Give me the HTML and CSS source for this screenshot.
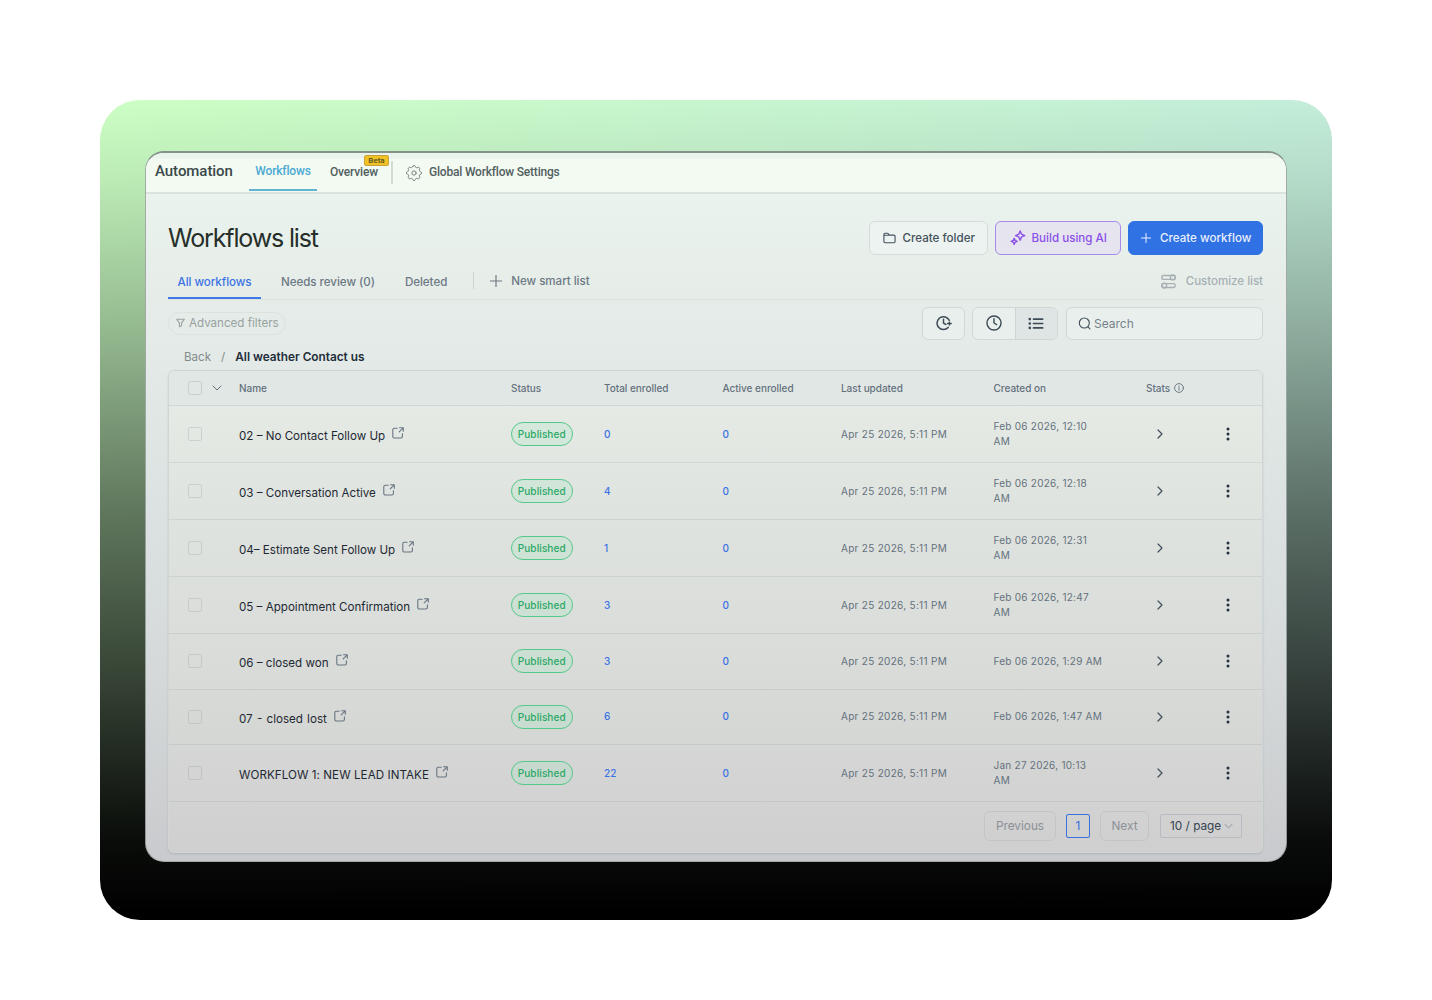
FILE: index.html
```html
<!DOCTYPE html>
<html lang="en">
	<head>
		<meta charset="UTF-8" />
		<meta name="viewport" content="width=device-width, initial-scale=1.0" />
		<title>Workflows list</title>
		<link rel="stylesheet" href="styles.css">
	</head>
	<body>
		<svg class="sprite">
			<symbol id="external" viewBox="0 0 12 12">
				<path d="M5.2 1.2H2.4a1.6 1.6 0 0 0-1.6 1.6v6.6A1.6 1.6 0 0 0 2.4 11h6.4a1.6 1.6 0 0 0 1.6-1.6V6.8M7.6.7h3.7v3.5M11.2.8 7.2 4.8" />
			</symbol>
			<symbol id="right" viewBox="0 0 8 10">
				<path d="m2 1 4 4-4 4" />
			</symbol>
			<symbol id="down" viewBox="0 0 10 6">
				<path d="m1 1 4 4 4-4" />
			</symbol>
			<symbol id="plus" viewBox="0 0 12 12">
				<path d="M6 .5v11M.5 6h11" />
			</symbol>
			<symbol id="dots" viewBox="0 0 4 14">
				<circle cx="2" cy="2" r="1.5" /><circle cx="2" cy="7" r="1.5" /><circle cx="2" cy="12" r="1.5" />
			</symbol>
		</svg>

		<div class="backdrop">
			<div class="window">
				<div class="navbar">
					<span class="brand">Automation</span>
					<a class="nav__link nav__link--active">Workflows</a>
					<a class="nav__link overview">Overview<span class="beta">Beta</span></a>
					<span class="nav__divider"></span>
					<svg class="icon gear" viewBox="0 0 24 24"><path d="M10.3 4.3c.4-1.8 3-1.8 3.4 0a1.7 1.7 0 0 0 2.6 1.1c1.5-.9 3.3.8 2.4 2.4a1.7 1.7 0 0 0 1 2.5c1.8.4 1.8 3 0 3.4a1.7 1.7 0 0 0-1 2.6c.9 1.5-.9 3.3-2.4 2.4a1.7 1.7 0 0 0-2.6 1c-.4 1.8-3 1.8-3.4 0a1.7 1.7 0 0 0-2.6-1c-1.5.9-3.3-.9-2.4-2.4a1.7 1.7 0 0 0-1-2.6c-1.8-.4-1.8-3 0-3.4a1.7 1.7 0 0 0 1-2.5c-.9-1.6.9-3.3 2.4-2.4 1 .6 2.3.1 2.6-1.1z" /><circle cx="12" cy="12" r="2.6" /></svg>
					<a class="nav__link settings">Global Workflow Settings</a>
				</div>

				<div class="content">
					<div class="title">
						<h1>Workflows list</h1>
						<button class="btn btn--folder">
							<svg class="icon" viewBox="0 0 14 12"><path d="M1 4V2.2C1 1.4 1.5.9 2.2.9h2.6c.5 0 .8.2 1 .6l.8 1.4h5.1c.8 0 1.3.5 1.3 1.3v5.6c0 .8-.5 1.3-1.3 1.3H2.3c-.8 0-1.3-.5-1.3-1.3V3h5.6" /></svg>
							Create folder
						</button>
						<button class="btn btn--ai">
							<svg class="icon" viewBox="0 0 16 16"><path d="m10.2 1 1.3 3.2 3.3 1.4-3.3 1.3-1.3 3.3-1.4-3.3-3.2-1.3 3.2-1.4zM4.2 8.3l.9 2.1 2.1.9-2.1.9-.9 2.2-.9-2.2-2.1-.9 2.1-.9z" /></svg>
							Build using AI
						</button>
						<button class="btn btn--primary">
							<svg class="icon"><use href="#plus" /></svg>
							Create workflow
						</button>
					</div>

					<div class="tabs">
						<a class="tab tab--active">All workflows</a>
						<a class="tab">Needs review (0)</a>
						<a class="tab">Deleted</a>
						<span class="tabs__divider"></span>
						<a class="smart"><svg class="icon"><use href="#plus" /></svg>New smart list</a>
						<a class="customize"><svg class="icon" viewBox="0 0 14 14"><rect x=".7" y="1.4" width="12.6" height="3.6" rx="1.8" /><circle cx="11" cy="3.2" r="2.3" /><rect x=".7" y="9" width="12.6" height="3.6" rx="1.8" /><circle cx="3" cy="10.8" r="2.3" /></svg>Customize list</a>
					</div>

					<div class="toolbar">
						<div class="filters"><svg class="icon" viewBox="0 0 10 10"><path d="M.8.9h8.4L6.2 4.9v3.2l-2.4 1V4.9z" /></svg>Advanced filters</div>
						<div class="tool"><svg class="icon" viewBox="0 0 16 16"><path d="M12.2 12.4A6.4 6.4 0 1 1 13.3 5.4M7.5 4.2v4l2.4 1.3M11.6 8.6h3.6M13.4 7.2v2.8" /></svg></div>
						<div class="toggle">
							<div class="toggle__item"><svg class="icon" viewBox="0 0 18 18"><circle cx="9" cy="9" r="7.9" /><path d="M9 4.3V9l3 1.7" /></svg></div>
							<div class="toggle__item toggle__item--on"><svg class="icon" viewBox="0 0 18 14"><path d="M6.2 2h10.3M6.2 7h10.3M6.2 12h10.3" /><path class="bullets" d="M2 2h.01M2 7h.01M2 12h.01" /></svg></div>
						</div>
						<div class="search"><svg class="icon" viewBox="0 0 14 14"><circle cx="6.8" cy="6.5" r="5.4" /><path d="m10.7 10.4 2.1 2.3" /></svg>Search</div>
					</div>

					<div class="crumbs"><span>Back</span><span>/</span><b>All weather Contact us</b></div>

					<div class="table">
						<div class="row row--head">
							<span class="pick"><i class="checkbox"></i><svg class="icon"><use href="#down" /></svg></span>
							<span>Name</span><span>Status</span><span>Total enrolled</span><span>Active enrolled</span><span>Last updated</span><span>Created on</span>
							<span class="stats">Stats<svg class="icon" viewBox="0 0 10 10"><circle cx="5" cy="5" r="4.4" /><path d="M5 4.6v2.6M5 2.8v.5" /></svg></span>
						</div>
						<div class="row">
							<i class="checkbox"></i>
							<span class="name">02 – No Contact Follow Up<svg class="icon"><use href="#external" /></svg></span>
							<span><em class="status">Published</em></span><a>0</a><a>0</a>
							<span>Apr 25 2026, 5:11 PM</span><span class="created">Feb 06 2026, 12:10 AM</span>
							<svg class="icon go"><use href="#right" /></svg><svg class="menu"><use href="#dots" /></svg>
						</div>
						<div class="row">
							<i class="checkbox"></i>
							<span class="name">03 – Conversation Active<svg class="icon"><use href="#external" /></svg></span>
							<span><em class="status">Published</em></span><a>4</a><a>0</a>
							<span>Apr 25 2026, 5:11 PM</span><span class="created">Feb 06 2026, 12:18 AM</span>
							<svg class="icon go"><use href="#right" /></svg><svg class="menu"><use href="#dots" /></svg>
						</div>
						<div class="row">
							<i class="checkbox"></i>
							<span class="name">04– Estimate Sent Follow Up<svg class="icon"><use href="#external" /></svg></span>
							<span><em class="status">Published</em></span><a>1</a><a>0</a>
							<span>Apr 25 2026, 5:11 PM</span><span class="created">Feb 06 2026, 12:31 AM</span>
							<svg class="icon go"><use href="#right" /></svg><svg class="menu"><use href="#dots" /></svg>
						</div>
						<div class="row">
							<i class="checkbox"></i>
							<span class="name">05 – Appointment Confirmation<svg class="icon"><use href="#external" /></svg></span>
							<span><em class="status">Published</em></span><a>3</a><a>0</a>
							<span>Apr 25 2026, 5:11 PM</span><span class="created">Feb 06 2026, 12:47 AM</span>
							<svg class="icon go"><use href="#right" /></svg><svg class="menu"><use href="#dots" /></svg>
						</div>
						<div class="row row--short">
							<i class="checkbox"></i>
							<span class="name">06 – closed won<svg class="icon"><use href="#external" /></svg></span>
							<span><em class="status">Published</em></span><a>3</a><a>0</a>
							<span>Apr 25 2026, 5:11 PM</span><span class="created">Feb 06 2026, 1:29 AM</span>
							<svg class="icon go"><use href="#right" /></svg><svg class="menu"><use href="#dots" /></svg>
						</div>
						<div class="row row--short">
							<i class="checkbox"></i>
							<span class="name name--spaced">07 - closed lost<svg class="icon"><use href="#external" /></svg></span>
							<span><em class="status">Published</em></span><a>6</a><a>0</a>
							<span>Apr 25 2026, 5:11 PM</span><span class="created">Feb 06 2026, 1:47 AM</span>
							<svg class="icon go"><use href="#right" /></svg><svg class="menu"><use href="#dots" /></svg>
						</div>
						<div class="row">
							<i class="checkbox"></i>
							<span class="name name--caps">WORKFLOW 1: NEW LEAD INTAKE<svg class="icon"><use href="#external" /></svg></span>
							<span><em class="status">Published</em></span><a>22</a><a>0</a>
							<span>Apr 25 2026, 5:11 PM</span><span class="created">Jan 27 2026, 10:13 AM</span>
							<svg class="icon go"><use href="#right" /></svg><svg class="menu"><use href="#dots" /></svg>
						</div>
						<div class="pager">
							<span class="pager__btn">Previous</span>
							<span class="pager__page">1</span>
							<span class="pager__btn pager__btn--next">Next</span>
							<span class="pager__size">10 / page<svg class="icon"><use href="#down" /></svg></span>
						</div>
					</div>
				</div>
			</div>
		</div>
	</body>
</html>
```

FILE: styles.css
```css
* {
	box-sizing: border-box;
	margin: 0;
	padding: 0;
}

body {
	width: 1432px;
	height: 1000px;
	padding: 100px;
	background: #fff;
	font-family: Inter, sans-serif;
	color: #43515f;
	overflow: hidden;
}

.sprite {
	display: none;
}

.icon {
	flex: none;
	fill: none;
	stroke: currentColor;
	stroke-width: 1.2;
	stroke-linecap: round;
	stroke-linejoin: round;
}

.backdrop {
	height: 820px;
	padding: 51px 45px 0;
	border-radius: 40px;
	background:
		linear-gradient(180deg, rgba(0, 0, 0, 0) 0%, rgba(0, 0, 0, .07) 9%, rgba(0, 0, 0, .24) 25%, rgba(0, 0, 0, .53) 50%, rgba(0, 0, 0, .73) 70%, rgba(0, 0, 0, .84) 80%, rgba(0, 0, 0, .95) 90%, #000 99%),
		linear-gradient(100deg, #ccffc4, #c2ebdc);
}

.window {
	height: 710.5px;
	border: 1px solid rgba(90, 100, 95, .5);
	border-top: 2px solid #85928a;
	border-bottom: 1px solid #a5a7a9;
	border-radius: 19px;
	background: linear-gradient(180deg, #ebf5ee 0%, #e5ebe8 25%, #dce2e1 50%, #d4d8d9 75%, #c9cacd 100%);
	overflow: hidden;
}

/* top navigation */
.navbar {
	display: flex;
	align-items: center;
	height: 41px;
	padding-left: 9px;
	border-bottom: 2px solid #d9e4df;
	background: linear-gradient(180deg, #ebf4ec 0 5px, #f2faf2 6px);
	font-family: Roboto, sans-serif;
	font-weight: 500;
	font-size: 12px;
	letter-spacing: -.15px;
	color: #52605f;
}

.brand {
	width: 94px;
	font-size: 15px;
	letter-spacing: -.05px;
	color: #3a4749;
	margin-top: -3px;
}

.nav__link {
	position: relative;
	margin-top: -1px;
	white-space: nowrap;
}

.nav__link--active {
	height: 38px;
	width: 68px;
	line-height: 37px;
	text-align: center;
	color: #4ba9d2;
	border-bottom: 2px solid #62b2d2;
}

.overview {
	margin-left: 13px;
	width: 61px;
}

.beta {
	position: absolute;
	left: 34px;
	top: -10px;
	width: 25px;
	height: 11px;
	border: 1px solid #c6a23a;
	border-radius: 2px;
	background: #f1c126;
	font-size: 8px;
	letter-spacing: 0;
	line-height: 9px;
	text-align: center;
	color: #54511f;
}

.nav__divider {
	width: 2px;
	height: 23px;
	background: #d2dad4;
}

.gear {
	width: 20px;
	height: 20px;
	margin: 0 5px 0 11px;
	color: #78827f;
}

.settings {
	letter-spacing: -.2px;
}

.content {
	padding: 27px 23px 0 22px;
}

.title {
	display: flex;
	height: 34px;
}

h1 {
	flex: 1;
	font-size: 25px;
	font-weight: 400;
	line-height: 34px;
	letter-spacing: -1.15px;
	color: #262e2a;
}

.btn {
	display: flex;
	align-items: center;
	height: 33.5px;
	margin-left: 7px;
	border: 1px solid #d3dcda;
	border-radius: 6px;
	background: #edf3f0;
	font: 500 11.6px Inter, sans-serif;
	color: #43515c;
	white-space: nowrap;
}

.btn--folder {
	width: 119px;
	padding-left: 13px;
}

.btn--folder .icon {
	width: 13px;
	height: 12px;
	margin-right: 7px;
}

.btn--ai {
	width: 126.5px;
	padding-left: 14px;
	border-color: #a888e8;
	background: #e6e5ef;
	color: #8a4fe8;
}

.btn--ai .icon {
	width: 16px;
	height: 16px;
	margin-right: 6px;
	stroke-width: 1.4;
}

.btn--primary {
	width: 135px;
	padding-left: 12px;
	border-color: #3071e4;
	background: #3071e4;
	color: #e9f0fb;
}

.btn--primary .icon {
	width: 10px;
	height: 10px;
	margin-right: 9px;
}

/* smart list tabs */
.tabs {
	display: flex;
	align-items: center;
	height: 45px;
	border-bottom: 1px solid #dae0de;
	font-size: 11.6px;
	font-weight: 500;
	letter-spacing: -.05px;
	color: #6d7984;
	white-space: nowrap;
}

.tab {
	height: 34px;
	margin: 10px 20px 0 0;
	line-height: 34px;
}

.tab--active {
	width: 93px;
	text-align: center;
	color: #3b72e4;
	border-bottom: 2px solid #3f7ae8;
}

.tab:nth-child(2) {
	margin-right: 30px;
}

.tabs__divider {
	width: 1px;
	height: 17px;
	margin: 7px 16px 0 6px;
	background: #cdd5d3;
}

.smart,
.customize {
	display: flex;
	align-items: center;
	margin-top: 8px;
}

.smart .icon {
	width: 12px;
	height: 12px;
	margin-right: 9px;
}

.customize {
	margin-left: auto;
	color: #a6b0b3;
}

.customize .icon {
	width: 15px;
	height: 15px;
	margin-right: 10px;
}

.toolbar {
	display: flex;
	align-items: center;
	height: 46px;
}

.filters {
	display: flex;
	align-items: center;
	width: 118px;
	height: 23px;
	margin-right: auto;
	padding-left: 7px;
	border: 1px solid #dce3df;
	border-radius: 12px;
	font-size: 11.6px;
	color: #98a29f;
	white-space: nowrap;
}

.filters .icon {
	width: 9px;
	height: 10px;
	margin-right: 4px;
}

.tool,
.toggle,
.search {
	display: flex;
	align-items: center;
	justify-content: center;
	height: 33px;
	border: 1px solid #d0d7d6;
	border-radius: 6px;
	background: #e9efec;
	color: #3d4b56;
}

.tool {
	width: 43px;
	margin-right: 7px;
}

.tool .icon {
	width: 16px;
	height: 16px;
	stroke-width: 1.5;
}

.toggle {
	width: 86px;
	margin-right: 8px;
	overflow: hidden;
}

.toggle__item {
	display: flex;
	flex: 1;
	height: 100%;
	align-items: center;
	justify-content: center;
}

.toggle__item--on {
	border-left: 1px solid #cdd4d5;
	background: #dfe5e4;
}

.toggle .icon {
	width: 16px;
	height: 16px;
	stroke-width: 1.6;
}

.toggle .toggle__item--on .icon {
	height: 13px;
	stroke-width: 1.9;
}

.bullets {
	stroke-width: 3;
}

.search {
	justify-content: flex-start;
	width: 197px;
	padding-left: 11px;
	font-size: 12px;
	color: #76828a;
}

.search .icon {
	width: 13px;
	height: 13px;
	margin-right: 3px;
	color: #43505a;
}

.crumbs {
	display: flex;
	gap: 10px;
	height: 24px;
	padding-left: 16px;
	font-size: 11.6px;
	line-height: 23px;
	color: #818b8a;
}

.crumbs b {
	font-size: 11.8px;
	font-weight: 600;
	color: #222e3a;
}

/* workflow table */
.table {
	height: 483px;
	border: 1px solid #d0d6d5;
	border-radius: 6px;
	box-shadow: 0 1px 2px rgba(60, 70, 75, .18);
	background: linear-gradient(180deg, #e5eae5 7%, #dfe3df 30%, #d9dcd9 60%, #cfcfcf 100%);
	overflow: hidden;
}

.row {
	display: grid;
	grid-template-columns: 51px 272px 93px 118.5px 118.5px 152.5px 152.5px 80px 20px;
	align-items: center;
	height: 57px;
	padding-left: 19px;
	border-bottom: 1px solid rgba(120, 135, 145, .16);
	font-size: 10px;
	letter-spacing: .3px;
	line-height: 15px;
	color: #64717d;
}

.row--short {
	height: 55.5px;
}

.row--head {
	height: 35px;
	background: #e1e7e5;
	font-weight: 500;
	letter-spacing: -.03px;
}

.pick,
.stats {
	display: flex;
	align-items: center;
}

.pick .icon {
	width: 10px;
	height: 6px;
	margin-left: 10px;
	stroke-width: 1;
}

.stats .icon {
	width: 10px;
	height: 10px;
	margin-left: 4px;
	stroke-width: .9;
}

.checkbox {
	width: 14px;
	height: 14px;
	border: 1px solid rgba(140, 150, 160, .28);
	border-radius: 2px;
}

.name {
	display: flex;
	padding-top: 5px;
	font-size: 11.6px;
	letter-spacing: 0;
	color: #1f2933;
}

.name--spaced {
	word-spacing: 1px;
}

.name--caps {
	letter-spacing: .07px;
}

.name .icon {
	width: 12px;
	height: 12px;
	margin: -2px 0 0 7px;
	stroke-width: 1.1;
	color: #687582;
}

.status {
	display: block;
	width: 62.5px;
	height: 24px;
	margin-left: -.5px;
	border: 1px solid #55c88b;
	border-radius: 12px;
	background: rgba(165, 230, 190, .25);
	font-style: normal;
	font-weight: 500;
	letter-spacing: .1px;
	line-height: 22px;
	text-align: center;
	color: #2aa866;
}

.row a {
	font-weight: 500;
	letter-spacing: 0;
	color: #3b72e4;
}

.created {
	width: 109px;
	letter-spacing: .25px;
}

.go {
	width: 8px;
	height: 10px;
	margin-left: 10px;
	color: #43505b;
}

.menu {
	width: 4px;
	height: 14px;
	fill: #25313e;
}

.pager {
	display: flex;
	align-items: center;
	justify-content: flex-end;
	height: 47px;
	padding-right: 20px;
	font-size: 11.8px;
	color: #8b9097;
}

.pager__btn {
	width: 72px;
	height: 30px;
	margin-right: 10px;
	border: 1px solid #c2c5c8;
	border-radius: 6px;
	line-height: 28px;
	text-align: center;
}

.pager__btn--next {
	width: 49px;
	margin-right: 11px;
}

.pager__page {
	width: 24px;
	height: 24px;
	margin-right: 10px;
	border: 1px solid #3b6fdc;
	border-radius: 2px;
	line-height: 22px;
	text-align: center;
	color: #3b6fdc;
}

.pager__size {
	display: flex;
	align-items: center;
	width: 82px;
	height: 24px;
	padding-left: 9px;
	border: 1px solid #b8bbc2;
	border-radius: 2px;
	color: #374351;
	white-space: nowrap;
}

.pager__size .icon {
	width: 9px;
	height: 6px;
	margin-left: 3px;
	color: #a4a9af;
}
```
